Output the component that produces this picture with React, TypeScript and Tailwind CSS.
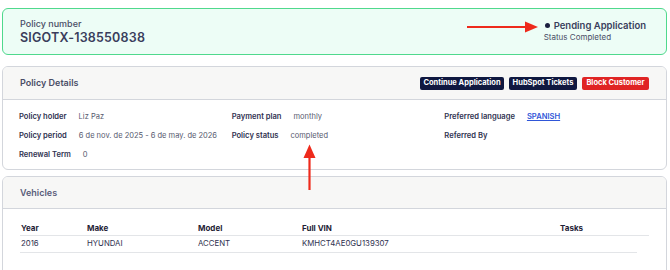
const details = [
  [
    { label: 'Policy holder', value: 'Liz Paz' },
    { label: 'Policy period', value: '6 de nov. de 2025 - 6 de may. de 2026' },
    { label: 'Renewal Term', value: '0' },
  ],
  [
    { label: 'Payment plan', value: 'monthly' },
    { label: 'Policy status', value: 'completed' },
  ],
  [
    { label: 'Preferred language', value: 'SPANISH', link: true },
    { label: 'Referred By', value: '' },
  ],
];

const vehicleCols = 'grid grid-cols-[66px_111px_104px_258px_1fr]';

export default function App() {
  return (
    <div className="relative w-[670px] h-[270px] overflow-hidden bg-white font-['Inter',sans-serif] text-[#3a3d5c]">
      <div className="pt-2 pl-[2px] pr-[3px] flex flex-col">
        {/* policy number banner */}
        <div className="h-[47px] rounded-md border border-[#4fd98d] bg-[#edfdf6] flex items-center justify-between pl-[17px] pr-[20px]">
          <div className="flex flex-col">
            <span className="text-[9px] font-medium text-[#4a4d66] leading-[12px]">Policy number</span>
            <span className="text-[12.5px] font-semibold tracking-[0.2px] leading-[16px]">SIGOTX-138550838</span>
          </div>
          <div className="flex flex-col items-start -mt-[2px]">
            <div className="flex items-center gap-[4px] ml-[1px]">
              <span className="w-[5px] h-[5px] rounded-full bg-[#1b1f3f]" />
              <span className="text-[9.5px] font-semibold leading-[13px]">Pending Application</span>
            </div>
            <span className="text-[8px] text-[#4a4d66] leading-[10px]">Status Completed</span>
          </div>
        </div>

        {/* policy details */}
        <div className="mt-[11px] h-[104px] rounded-md border border-[#d3d6dc] overflow-hidden">
          <div className="h-[33px] bg-[#f7f7f6] border-b border-[#d3d6dc] flex items-center justify-between pl-[17px] pr-[17px]">
            <span className="text-[9px] font-semibold text-[#4a4d66]">Policy Details</span>
            <div className="flex gap-[5px]">
              <button className="h-[13px] w-[84px] rounded-[2px] bg-[#101840] text-white text-[7.5px] font-bold">
                Continue Application
              </button>
              <button className="h-[13px] w-[68px] rounded-[2px] bg-[#101840] text-white text-[7.5px] font-bold">
                HubSpot Tickets
              </button>
              <button className="h-[13px] w-[67px] rounded-[2px] bg-[#e02424] text-white text-[7.5px] font-bold">
                Block Customer
              </button>
            </div>
          </div>
          <div className="grid grid-cols-3 pl-[16px] pr-[9px] pt-[11px]">
            {details.map((col, i) => (
              <div key={i} className="flex flex-col gap-[7px]">
                {col.map((d) => (
                  <div key={d.label} className="flex items-center gap-[12px] h-[12px]">
                    <span className="text-[7.6px] font-semibold text-[#2f3250]">{d.label}</span>
                    {d.link ? (
                      <span className="text-[7.6px] font-semibold text-[#2f56d8] underline">{d.value}</span>
                    ) : (
                      <span className="text-[7.5px] text-[#55586e]">{d.value}</span>
                    )}
                  </div>
                ))}
              </div>
            ))}
          </div>
        </div>

        {/* vehicles */}
        <div className="mt-[6px] h-[110px] rounded-md border border-[#d3d6dc] overflow-hidden">
          <div className="h-[32px] bg-[#f7f7f6] border-b border-[#d3d6dc] flex items-center pl-[17px]">
            <span className="text-[9px] font-semibold text-[#5a5d7a]">Vehicles</span>
          </div>
          <div className="pl-[17px] pr-[17px] pt-[11px]">
            <div className={`${vehicleCols} h-[16px] items-center border-b border-[#e3e5e8] text-[8px] font-bold text-[#1f2235] pl-[1px]`}>
              <span>Year</span>
              <span>Make</span>
              <span>Model</span>
              <span>Full VIN</span>
              <span>Tasks</span>
            </div>
            <div className="mr-[12px] border-b border-[#e3e5e8]">
              <div className={`${vehicleCols} h-[16px] items-center text-[7.8px] text-[#2f3250] pl-[1px]`}>
                <span>2016</span>
                <span>HYUNDAI</span>
                <span>ACCENT</span>
                <span>KMHCT4AE0GU139307</span>
                <span />
              </div>
            </div>
          </div>
        </div>
      </div>

      {/* annotation arrows */}
      <svg className="absolute left-[465px] top-[21px]" width="74" height="12" viewBox="0 0 74 12">
        <line x1="2" y1="6" x2="62" y2="6" stroke="#ee2a1c" strokeWidth="2.2" />
        <polygon points="60,0.5 73,6 60,11.5" fill="#ee2a1c" />
      </svg>
      <svg className="absolute left-[303px] top-[144px]" width="13" height="47" viewBox="0 0 13 47">
        <polygon points="6.5,0.5 12.5,14 0.5,14" fill="#ee2a1c" />
        <line x1="6.5" y1="12" x2="6.5" y2="46" stroke="#ee2a1c" strokeWidth="2.2" />
      </svg>
    </div>
  );
}
